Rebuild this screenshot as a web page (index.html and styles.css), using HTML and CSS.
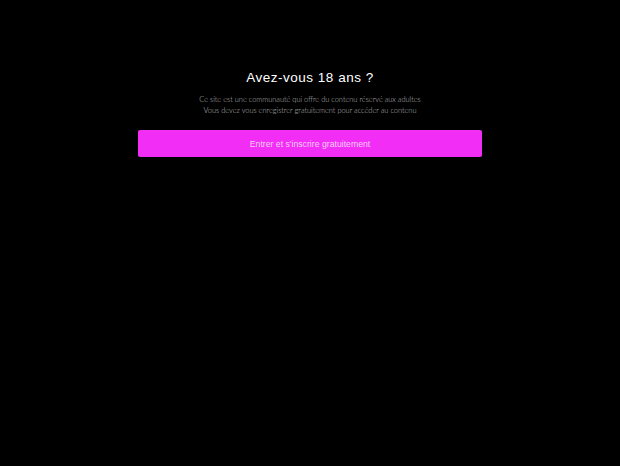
FILE: index.html
```html
<!DOCTYPE html>
<html lang="fr">
<head>
<meta charset="utf-8">
<link rel="stylesheet" href="styles.css">
</head>
<body>
<div class="gate">
  <h1 class="title">Avez-vous 18 ans ?</h1>
  <p class="text">Ce site est une communauté qui offre du contenu réservé aux adultes<br>Vous devez vous enregistrer gratuitement pour accéder au contenu</p>
  <a class="btn" href="#">Entrer et s'inscrire gratuitement</a>
</div>
</body>
</html>
```
FILE: styles.css
```css
html, body { margin: 0; padding: 0; background: #000; }
body { width: 620px; height: 466px; font-family: "Liberation Sans", Arial, sans-serif; }
.gate { width: 344px; margin: 0 auto; padding-top: 69px; display: flex; flex-direction: column; align-items: center; }
.title { margin: 0; font-size: 13.5px; font-weight: normal; color: #fff; line-height: 17px; letter-spacing: 0.5px; }
.text { margin: 8px 0 0; font-size: 7.4px; line-height: 11px; color: #bfbfbf; text-align: center; font-family: Lato, sans-serif; font-weight: 300; }
.btn { margin-top: 14px; width: 344px; height: 27px; box-sizing: border-box; background: #f22ef6; border-radius: 2px; color: #f7cdf9; font-size: 8.7px; text-decoration: none; display: flex; align-items: center; justify-content: center; }
```
